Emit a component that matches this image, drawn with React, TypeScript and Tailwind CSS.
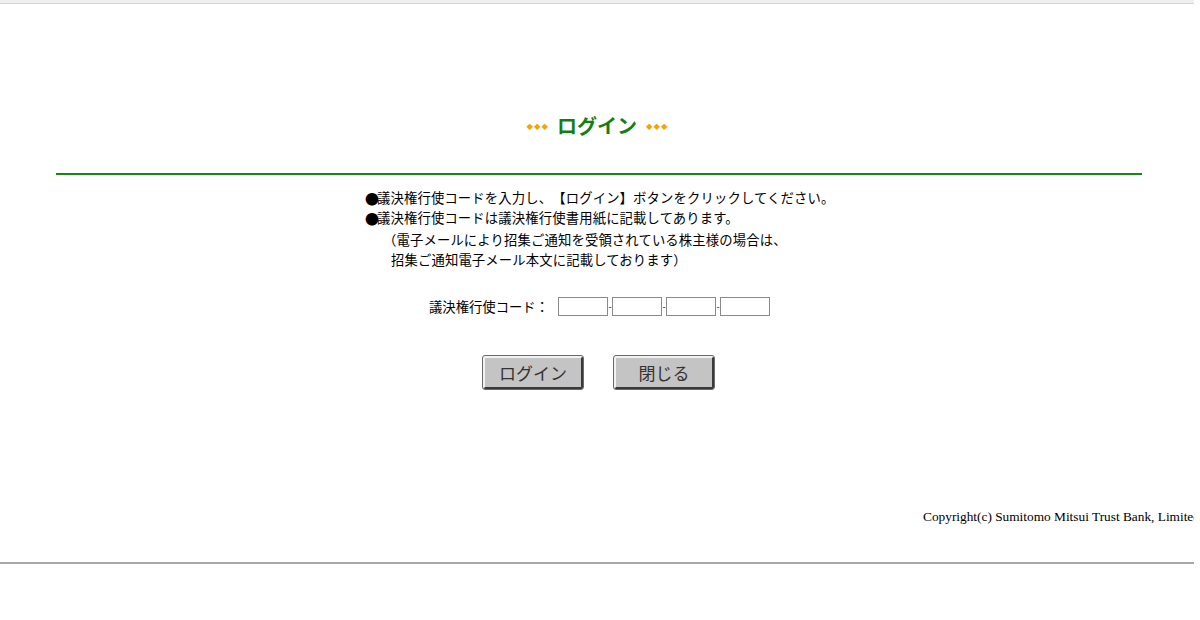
import React from 'react';

const jp = { fontFamily: '"MS PGothic", "Noto Sans CJK JP", sans-serif' };

const CodeBox: React.FC = () => (
  <input
    type="text"
    className="w-[50px] h-[19px] border border-[#8a8a8a] bg-white outline-none"
  />
);

const Diamonds: React.FC = () => (
  <span className="inline-flex items-center gap-[1px] text-[#f5a300] text-[6.5px] leading-none">
    <span>◆</span>
    <span>◆</span>
    <span>◆</span>
  </span>
);

const App: React.FC = () => {
  return (
    <div className="w-[1200px] h-[620px] bg-white overflow-hidden [text-spacing-trim:space-all]" style={jp}>
      <div className="w-[1194px] h-[564px] overflow-hidden flex flex-col border-b-2 border-[#a8a8a8]">
        {/* browser-ish top band */}
        <div className="h-[4px] bg-[#efefef] border-b border-[#d4d4d4]" />

        {/* title */}
        <div className="mt-[110px] flex items-center justify-center gap-[9px] text-[#118011]">
          <Diamonds />
          <h1 className="text-[20px] font-bold leading-[24px]">ログイン</h1>
          <Diamonds />
        </div>

        {/* green rule */}
        <div className="mt-[35px] ml-[56px] w-[1086px] h-[2px] bg-[#1a861a]" />

        {/* notes */}
        <div className="mt-[13px] ml-[365px] text-[13.33px] leading-[20px] text-black tracking-[0.15px]">
          <p className="flex items-center">
            <span className="text-[14px] w-[12px]">●</span>議決権行使コードを入力し、【ログイン】ボタンをクリックしてください。
          </p>
          <p className="flex items-center">
            <span className="text-[14px] w-[12px]">●</span>議決権行使コードは議決権行使書用紙に記載してあります。
          </p>
          <p className="mt-[2px] pl-[18px]">（電子メールにより招集ご通知を受領されている株主様の場合は、</p>
          <p className="pl-[26px]">招集ご通知電子メール本文に記載しております）</p>
        </div>

        {/* code inputs */}
        <div className="mt-[27px] ml-[429px] flex items-center text-[13.33px]">
          <span className="mr-[9px]">議決権行使コード：</span>
          <CodeBox />
          <span className="text-[9px] w-[4px] text-center">-</span>
          <CodeBox />
          <span className="text-[9px] w-[4px] text-center">-</span>
          <CodeBox />
          <span className="text-[9px] w-[4px] text-center">-</span>
          <CodeBox />
        </div>

        {/* buttons */}
        <div className="mt-[39px] ml-[483px] flex gap-[31px]">
          <button className="w-[100px] h-[33px] bg-[#c4c4c4] text-[#333] text-[17px] border-2 border-t-[#f2f2f2] border-l-[#f2f2f2] border-r-[#3a3a3a] border-b-[#3a3a3a] rounded-[2px] outline outline-1 outline-[#6a6a6a]">
            ログイン
          </button>
          <button className="w-[100px] h-[33px] bg-[#c4c4c4] text-[#333] text-[17px] border-2 border-t-[#f2f2f2] border-l-[#f2f2f2] border-r-[#3a3a3a] border-b-[#3a3a3a] rounded-[2px] outline outline-1 outline-[#6a6a6a]">
            閉じる
          </button>
        </div>

        {/* copyright */}
        <div
          className="mt-[120px] ml-[923px] whitespace-nowrap text-[13.33px] leading-[16px] text-black"
          style={{ fontFamily: '"Liberation Serif", "Times New Roman", serif' }}
        >
          Copyright(c) Sumitomo Mitsui Trust Bank, Limited. All Rights Reserved.
        </div>
      </div>
    </div>
  );
};

export default App;
